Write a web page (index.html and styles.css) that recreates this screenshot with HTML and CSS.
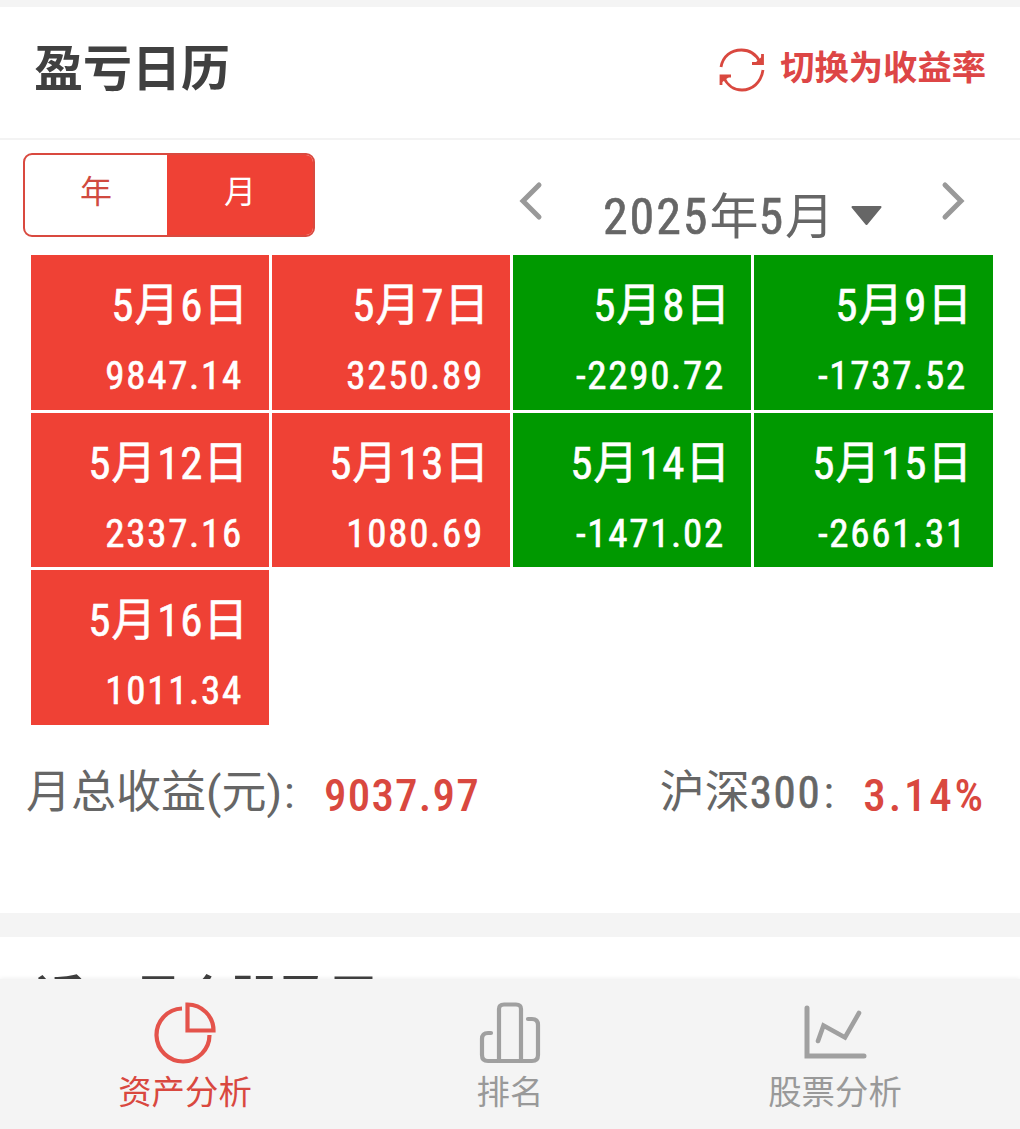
FILE: index.html
```html
<!DOCTYPE html>
<html lang="zh-CN">
<head>
  <meta charset="UTF-8">
  <title>盈亏日历</title>
  <meta name="viewport" content="width=device-width, initial-scale=1.0">
  <link rel="stylesheet" href="styles.css">
</head>
<body>
  <main class="content">
    <section class="card calendar">
      <header class="card-header">
        <h2>盈亏日历</h2>
        <button class="switch">
          <svg width="46" height="46" viewBox="0 0 46 46" fill="none" stroke="#d9483f" stroke-width="2.8">
            <path d="M2 20C4 9 12 3 22.500 3C31 3 37 7 41 15"/>
            <path d="M44 23C42 36 33 43 23 43C15 43 8 38 4.500 30"/>
            <path d="M36 16L43.500 17V9Z" fill="#d9483f" stroke="none"/>
            <path d="M33 16.500H43.500V7"/>
            <path d="M2 29L10 30L2 36Z" fill="#d9483f" stroke="none"/>
            <path d="M2 38V29H12"/>
          </svg>
          <span>切换为收益率</span>
        </button>
      </header>

      <div class="toolbar">
        <div class="toggle">
          <button>年</button>
          <button class="active">月</button>
        </div>
        <div class="month-picker">
          <svg class="prev" width="24" height="40" viewBox="0 0 24 40"><path d="M20 4L4 20L20 36"/></svg>
          <div class="month"><span class="num">2025</span>年<span class="num">5</span>月</div>
          <svg class="caret" width="33" height="22" viewBox="0 0 33 22"><path d="M2.500 2H30.500L16.500 19Z"/></svg>
          <svg class="next" width="24" height="40" viewBox="0 0 24 40"><path d="M4 4L20 20L4 36"/></svg>
        </div>
      </div>

      <div class="days">
        <div class="day up"><span class="date">5月6日</span><span class="amount">9847.14</span></div>
        <div class="day up"><span class="date">5月7日</span><span class="amount">3250.89</span></div>
        <div class="day down"><span class="date">5月8日</span><span class="amount">-2290.72</span></div>
        <div class="day down"><span class="date">5月9日</span><span class="amount">-1737.52</span></div>
        <div class="day up"><span class="date">5月12日</span><span class="amount">2337.16</span></div>
        <div class="day up"><span class="date">5月13日</span><span class="amount">1080.69</span></div>
        <div class="day down"><span class="date">5月14日</span><span class="amount">-1471.02</span></div>
        <div class="day down"><span class="date">5月15日</span><span class="amount">-2661.31</span></div>
        <div class="day up"><span class="date">5月16日</span><span class="amount">1011.34</span></div>
      </div>

      <div class="summary">
        <div class="total"><span class="label">月总收益(元)<i>:</i></span><span class="value">9037.97</span></div>
        <div class="index"><span class="label">沪深<b>300</b><i>:</i></span><span class="value">3.14%</span></div>
      </div>
    </section>

    <section class="card next-card">
      <h2>近一月个股盈亏</h2>
    </section>
  </main>

  <nav class="tabs">
    <a class="tab active">
      <svg width="64" height="64" viewBox="0 0 64 64">
        <path d="M29 7.500A26.500 26.500 0 1 0 56.500 34"/>
        <path d="M34.500 3.500V29.500H60.500A26 26 0 0 0 34.500 3.500Z"/>
      </svg>
      <span>资产分析</span>
    </a>
    <a class="tab">
      <svg width="64" height="64" viewBox="0 0 64 64">
        <path d="M13 32H10Q4 32 4 38V54Q4 60 10 60H54Q60 60 60 54V24Q60 18 54 18H50"/>
        <path d="M21 60V8Q21 3.500 26 3.500H38Q43 3.500 43 8V60"/>
      </svg>
      <span>排名</span>
    </a>
    <a class="tab">
      <svg width="64" height="64" viewBox="0 0 64 64">
        <path d="M4 7V55H61" stroke-width="5"/>
        <path d="M15 40L20.500 24.500L42 36.500L56 12" stroke-width="4.600"/>
      </svg>
      <span>股票分析</span>
    </a>
  </nav>
</body>
</html>
```
FILE: styles.css
```css
* {
  box-sizing: border-box;
}
body {
  margin: 0;
  height: 1129px;
  display: flex;
  flex-direction: column;
  overflow: hidden;
  background: #f4f4f4;
  color: #666;
  font-family: Roboto, "Noto Sans CJK SC", sans-serif;
}
button {
  margin: 0;
  padding: 0;
  border: none;
  background: none;
  font-family: inherit;
}
h2 {
  margin: 0;
  color: #404040;
  font-size: 49px;
  line-height: 60px;
  font-weight: bold;
}
.content {
  height: 979px;
  padding-top: 7px;
  overflow: hidden;
}
.card {
  background: #fff;
}
.calendar {
  height: 906px;
}
.card-header {
  display: flex;
  justify-content: space-between;
  height: 133px;
  padding: 33px 34px 0 34px;
  border-bottom: 2px solid #f3f3f3;
}
.switch {
  display: flex;
  align-items: center;
  gap: 15px;
  height: 60px;
  color: #dd4646;
  font-size: 34.3px;
  font-weight: bold;
}
.switch span {
  padding-bottom: 10px;
}

.toolbar {
  display: flex;
  justify-content: space-between;
  height: 115px;
  padding: 13px 55px 0 23px;
}
.toggle {
  display: flex;
  width: 292px;
  height: 84px;
  border: 2px solid #d9493f;
  border-radius: 9px;
  overflow: hidden;
}
.toggle button {
  width: 142px;
  padding-bottom: 12px;
  color: #d04a3f;
  font-size: 32px;
}
.toggle .active {
  flex: 1;
  background: #ef4135;
  color: #fff;
}
.month-picker {
  display: flex;
  align-items: flex-start;
}
.month-picker svg {
  margin-top: 28px;
  fill: none;
  stroke: #999;
  stroke-width: 5;
  stroke-linecap: round;
}
.month-picker .caret {
  margin: 52px 58px 0 16px;
  fill: #666;
  stroke: #666;
  stroke-width: 2;
  stroke-linejoin: round;
}
.month {
  margin: 26px 0 0 60px;
  font-size: 49px;
  line-height: 76px;
}
.month .num {
  font-size: 50px;
  font-stretch: 87%;
  letter-spacing: 1.900px;
  -webkit-text-stroke: 0.600px #666;
}

.days {
  display: grid;
  grid-template-columns: repeat(3, 238px) 239px;
  grid-auto-rows: 154.500px;
  gap: 3px;
  padding-left: 31px;
}
.day {
  display: flex;
  flex-direction: column;
  align-items: flex-end;
  padding: 21px 20px 0 0;
  color: #fff;
  -webkit-text-stroke: 0.600px #fff;
}
.up {
  background: #ef4135;
}
.down {
  background: #090;
}
.date {
  font-size: 45px;
  line-height: 60px;
  font-stretch: 87%;
  letter-spacing: 0.800px;
}
.amount {
  margin: 15px 6px 0 0;
  font-size: 39px;
  line-height: 50px;
  font-stretch: 87%;
  letter-spacing: 1.700px;
}

.summary {
  display: flex;
  justify-content: space-between;
  padding: 38px 34px 0 26px;
}
.label {
  font-size: 45px;
  line-height: 60px;
}
.label i {
  font-style: normal;
  margin-left: 2px;
}
.label b {
  font-weight: normal;
  font-stretch: 87%;
  letter-spacing: 1.700px;
  -webkit-text-stroke: 0.600px #666;
}
.value {
  display: inline-block;
  margin-left: 29px;
  padding-top: 6px;
  vertical-align: -3px;
  color: #d9483f;
  font-size: 45px;
  font-weight: 500;
  font-stretch: 87%;
  letter-spacing: 1.200px;
}
.index .value {
  letter-spacing: 2.800px;
}

.next-card {
  height: 60px;
  margin-top: 24px;
  padding: 33px 35px;
}

.tabs {
  display: flex;
  justify-content: center;
  height: 150px;
  background: #f4f4f4;
  box-shadow: 0 -1px 4px rgba(0, 0, 0, 0.060);
}
.tab {
  display: flex;
  flex-direction: column;
  align-items: center;
  gap: 3px;
  width: 325px;
  padding-top: 22px;
  color: #999;
  font-size: 33.400px;
  line-height: 50px;
}
.tab svg {
  fill: none;
  stroke: #a0a0a0;
  stroke-width: 4.200;
  stroke-linecap: round;
}
.tab.active {
  color: #d9483f;
}
.tab.active svg {
  stroke: #e4534b;
  stroke-linecap: butt;
}
```
